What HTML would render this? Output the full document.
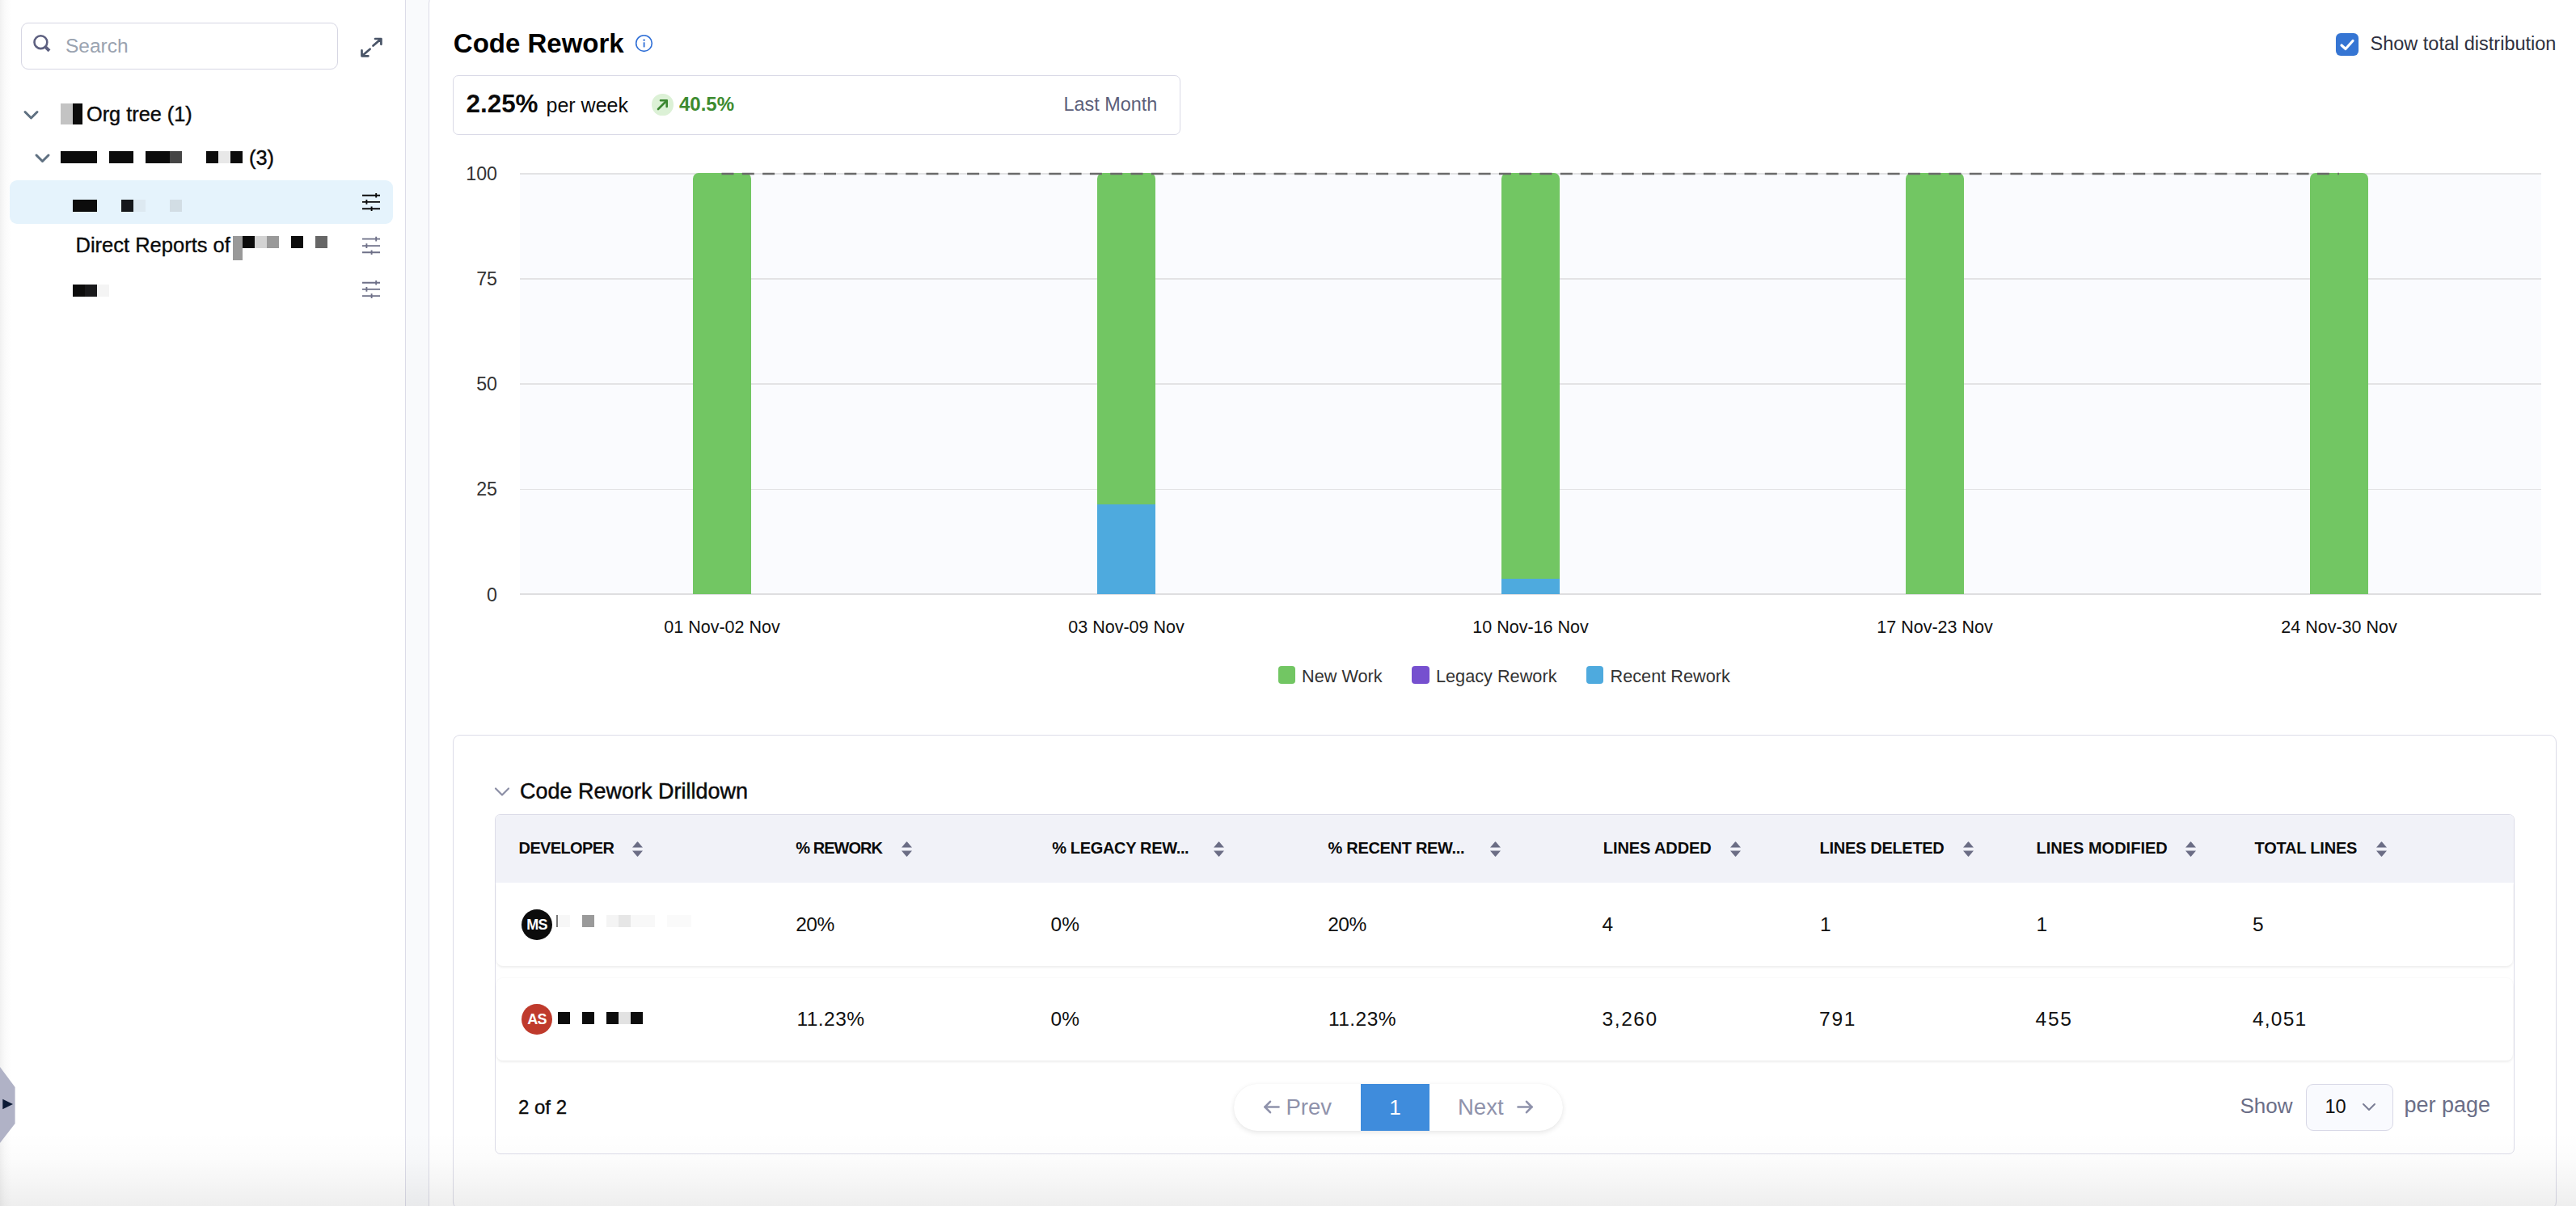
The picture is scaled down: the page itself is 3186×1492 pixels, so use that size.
<!DOCTYPE html>
<html><head><meta charset="utf-8">
<style>
*{box-sizing:border-box}
html,body{margin:0;padding:0}
body{width:3186px;height:1492px;overflow:hidden;position:relative;background:#fff;font-family:"Liberation Sans",sans-serif;color:#0b0b0b}
.a{position:absolute}
.t{position:absolute;white-space:nowrap;line-height:1}
.rd{position:absolute;background:#0c0c0c}
</style></head><body>

<!-- ===== SIDEBAR ===== -->
<div class="a" style="left:0;top:0;width:502px;height:1492px;background:linear-gradient(to right,#f1f1f1 0px,#fafafa 6px,#fff 14px);border-right:1.5px solid #dcdce8"></div>
<div class="a" style="left:502px;top:0;width:29px;height:1492px;background:#f9fafc"></div>

<!-- search -->
<div class="a" style="left:26px;top:28px;width:392px;height:58px;border:1.5px solid #d6d6e3;border-radius:9px;background:#fff"></div>
<svg class="a" style="left:38px;top:40px" width="28" height="28" viewBox="0 0 28 28"><circle cx="12.4" cy="12.2" r="7.9" fill="none" stroke="#5d6080" stroke-width="2.6"/><path d="M18.3 18.1 L23 22.8" stroke="#5d6080" stroke-width="4" stroke-linecap="butt"/></svg>
<div class="t" style="left:81px;top:44.8px;font-size:24.5px;color:#9aa3b0">Search</div>

<!-- expand icon -->
<svg class="a" style="left:440px;top:40px" width="40" height="36" viewBox="0 0 40 36"><g fill="none" stroke="#4a5568" stroke-width="2.7" stroke-linecap="round" stroke-linejoin="round"><path d="M24 8 H31.4 V14.8 M31 8.4 L21.5 16.5"/><path d="M7.5 22.4 V29.3 H15.4 M8 29 L17.6 20.7"/></g></svg>

<!-- tree -->
<svg class="a" style="left:28px;top:134px" width="22" height="16" viewBox="0 0 22 16"><path d="M3 4.5 L10.5 12 L18 4.5" fill="none" stroke="#5f7081" stroke-width="3" stroke-linecap="round" stroke-linejoin="round"/></svg>
<div class="rd" style="left:75px;top:128px;width:15px;height:26px;background:#c3c3c3"></div>
<div class="rd" style="left:90px;top:128px;width:12px;height:26px"></div>
<div class="t" style="left:107px;top:128.5px;font-size:25.3px;color:#0b0b0b;-webkit-text-stroke:0.4px #0b0b0b">Org tree (1)</div>

<svg class="a" style="left:42px;top:188px" width="22" height="16" viewBox="0 0 22 16"><path d="M3 4 L10.5 11.5 L18 4" fill="none" stroke="#5f7081" stroke-width="3" stroke-linecap="round" stroke-linejoin="round"/></svg>
<div class="rd" style="left:75px;top:187px;width:45px;height:15px"></div>
<div class="rd" style="left:135px;top:187px;width:30px;height:15px"></div>
<div class="rd" style="left:180px;top:187px;width:30px;height:15px"></div>
<div class="rd" style="left:210px;top:187px;width:15px;height:15px;background:#454545"></div>
<div class="rd" style="left:255px;top:187px;width:15px;height:15px"></div>
<div class="rd" style="left:270px;top:187px;width:15px;height:15px;background:#e8e8e8"></div>
<div class="rd" style="left:285px;top:187px;width:15px;height:15px"></div>
<div class="t" style="left:308px;top:182.5px;font-size:25.3px;color:#0b0b0b;-webkit-text-stroke:0.4px #0b0b0b">(3)</div>

<!-- selected row -->
<div class="a" style="left:12px;top:223px;width:474px;height:54px;background:#e5f3fc;border-radius:9px"></div>
<div class="rd" style="left:90px;top:247px;width:30px;height:15px"></div>
<div class="rd" style="left:150px;top:247px;width:15px;height:15px;background:#16181a"></div>
<div class="rd" style="left:165px;top:247px;width:15px;height:15px;background:#dde9f1"></div>
<div class="rd" style="left:210px;top:247px;width:15px;height:15px;background:#d2dde4"></div>
<svg class="a" style="left:444px;top:236px" width="30" height="26" viewBox="0 0 30 26"><g stroke="#0b0b0b" stroke-width="1.9" fill="none"><path d="M4 5.8 H26 M21.2 3 V8.6"/><path d="M4 13.9 H26 M9.4 11.1 V16.7"/><path d="M4 22.3 H26 M15.6 19.5 V25.1"/></g></svg>

<div class="t" style="left:93.5px;top:291.2px;font-size:25.5px;color:#0b0b0b;-webkit-text-stroke:0.35px #0b0b0b">Direct Reports of</div>
<div class="rd" style="left:288px;top:292px;width:12px;height:30px;background:#999"></div>
<div class="rd" style="left:300px;top:292px;width:15px;height:15px"></div>
<div class="rd" style="left:315px;top:292px;width:15px;height:15px;background:#d3d3d3"></div>
<div class="rd" style="left:330px;top:292px;width:15px;height:15px;background:#999"></div>
<div class="rd" style="left:360px;top:292px;width:15px;height:15px"></div>
<div class="rd" style="left:390px;top:292px;width:15px;height:15px;background:#666"></div>
<svg class="a" style="left:444px;top:290px" width="30" height="26" viewBox="0 0 30 26"><g stroke="#6e7088" stroke-width="1.9" fill="none"><path d="M4 5.6 H26 M21.2 2.8 V8.4"/><path d="M4 14.1 H26 M9.4 11.3 V16.9"/><path d="M4 22.2 H26 M15.6 19.4 V25"/></g></svg>

<div class="rd" style="left:90px;top:352px;width:15px;height:15px"></div>
<div class="rd" style="left:105px;top:352px;width:15px;height:15px;background:#19191b"></div>
<div class="rd" style="left:120px;top:352px;width:15px;height:15px;background:#f4f4f4"></div>
<svg class="a" style="left:444px;top:344px" width="30" height="26" viewBox="0 0 30 26"><g stroke="#6e7088" stroke-width="1.9" fill="none"><path d="M4 5.8 H26 M21.2 3 V8.6"/><path d="M4 13.9 H26 M9.4 11.1 V16.7"/><path d="M4 22.1 H26 M15.6 19.3 V24.9"/></g></svg>

<!-- collapse tab -->
<svg class="a" style="left:0;top:1318px" width="22" height="100" viewBox="0 0 22 100"><path d="M0 2 L18.6 27 V72 L0 96 Z" fill="#b0b2c6"/><path d="M3.3 41.7 L16 48 L3.3 54.3 Z" fill="#0b1a35"/></svg>

<!-- ===== MAIN CARD ===== -->
<div class="a" style="left:530px;top:-6px;width:2700px;height:1600px;border:1.5px solid #dcdce8;border-radius:10px;background:#fff"></div>

<!-- title -->
<div class="t" style="left:560.8px;top:36.5px;font-size:33px;font-weight:700;color:#000">Code Rework</div>
<svg class="a" style="left:784px;top:40.5px" width="26" height="26" viewBox="0 0 26 26"><circle cx="12.5" cy="12.6" r="9.8" fill="none" stroke="#2f6fd6" stroke-width="1.6"/><circle cx="12.6" cy="8.6" r="1.2" fill="#2f6fd6"/><path d="M12.6 11.3 V17.4" stroke="#2f6fd6" stroke-width="1.8"/></svg>

<!-- show total distribution -->
<div class="a" style="left:2889px;top:41px;width:28px;height:28px;border-radius:6px;background:#3575d3;box-shadow:0 0 3px rgba(0,0,0,0.06)"></div>
<svg class="a" style="left:2889px;top:41px" width="28" height="28" viewBox="0 0 28 28"><path d="M7 15 L12 19.5 L21 9.5" fill="none" stroke="#fff" stroke-width="3.2" stroke-linecap="round" stroke-linejoin="round"/></svg>
<div class="t" style="left:2931.5px;top:43px;font-size:23.5px;color:#2f3140">Show total distribution</div>

<!-- summary box -->
<div class="a" style="left:560px;top:93px;width:900px;height:74px;border:1.5px solid #d9d9e6;border-radius:7px"></div>
<div class="t" style="left:576.5px;top:113.2px;font-size:31.4px;font-weight:700;color:#0b0b0b">2.25%</div>
<div class="t" style="left:675.5px;top:117.5px;font-size:25px;color:#0b0b0b">per week</div>
<div class="a" style="left:806.3px;top:116.3px;width:26.4px;height:26.4px;border-radius:50%;background:#dcf1d6"></div>
<svg class="a" style="left:806px;top:116px" width="27" height="27" viewBox="0 0 27 27"><g fill="none" stroke="#3b8731" stroke-width="2.6" stroke-linecap="round" stroke-linejoin="round"><path d="M8 19 L18.5 8.5"/><path d="M11 8.3 H18.7 V16"/></g></svg>
<div class="t" style="left:840px;top:116.8px;font-size:24px;font-weight:700;color:#3d8b2f">40.5%</div>
<div class="t" style="left:1315.5px;top:118.2px;font-size:23.4px;color:#5c5f7a">Last Month</div>

<!-- chart -->
<div class="a" style="left:643px;top:215px;width:2500px;height:520px;background:#fafbfe"></div>
<div class="a" style="left:643px;top:214.2px;width:2500px;height:1.6px;background:#e3e3e5"></div>
<div class="a" style="left:643px;top:344.4px;width:2500px;height:1.6px;background:#e3e3e5"></div>
<div class="a" style="left:643px;top:474.4px;width:2500px;height:1.6px;background:#e3e3e5"></div>
<div class="a" style="left:643px;top:604.6px;width:2500px;height:1.6px;background:#e3e3e5"></div>
<div class="a" style="left:643px;top:734px;width:2500px;height:2px;background:#dedee0"></div>

<div class="t" style="left:515px;width:100px;text-align:right;top:204.4px;font-size:23.2px;color:#333">100</div>
<div class="t" style="left:515px;width:100px;text-align:right;top:334.4px;font-size:23.2px;color:#333">75</div>
<div class="t" style="left:515px;width:100px;text-align:right;top:464.4px;font-size:23.2px;color:#333">50</div>
<div class="t" style="left:515px;width:100px;text-align:right;top:594.4px;font-size:23.2px;color:#333">25</div>
<div class="t" style="left:515px;width:100px;text-align:right;top:724.6px;font-size:23.2px;color:#333">0</div>

<div class="a" style="left:857px;top:214px;width:72px;height:521px;background:#72c663;border-radius:7px 7px 0 0"></div>
<div class="a" style="left:1357px;top:214px;width:72px;height:521px;background:#72c663;border-radius:7px 7px 0 0"></div>
<div class="a" style="left:1357px;top:624px;width:72px;height:111px;background:#4eaade"></div>
<div class="a" style="left:1857px;top:214px;width:72px;height:521px;background:#72c663;border-radius:7px 7px 0 0"></div>
<div class="a" style="left:1857px;top:716px;width:72px;height:19px;background:#4eaade"></div>
<div class="a" style="left:2357px;top:214px;width:72px;height:521px;background:#72c663;border-radius:7px 7px 0 0"></div>
<div class="a" style="left:2857px;top:214px;width:72px;height:521px;background:#72c663;border-radius:7px 7px 0 0"></div>
<svg class="a" style="left:0;top:0" width="3186" height="240"><path d="M892.5 215 H2893" stroke="#6a6a6a" stroke-width="2.3" stroke-dasharray="15 10.3"/></svg>

<div class="t" style="left:793px;width:200px;text-align:center;top:765.8px;font-size:21.5px;color:#111">01 Nov-02 Nov</div>
<div class="t" style="left:1293px;width:200px;text-align:center;top:765.8px;font-size:21.5px;color:#111">03 Nov-09 Nov</div>
<div class="t" style="left:1793px;width:200px;text-align:center;top:765.8px;font-size:21.5px;color:#111">10 Nov-16 Nov</div>
<div class="t" style="left:2293px;width:200px;text-align:center;top:765.8px;font-size:21.5px;color:#111">17 Nov-23 Nov</div>
<div class="t" style="left:2793px;width:200px;text-align:center;top:765.8px;font-size:21.5px;color:#111">24 Nov-30 Nov</div>

<div class="a" style="left:1580.5px;top:824px;width:21.5px;height:21.5px;border-radius:4px;background:#72c663"></div>
<div class="t" style="left:1610px;top:826.4px;font-size:21.7px;color:#333">New Work</div>
<div class="a" style="left:1746.3px;top:824px;width:21.5px;height:21.5px;border-radius:4px;background:#7650cf"></div>
<div class="t" style="left:1776px;top:826.4px;font-size:21.7px;color:#333">Legacy Rework</div>
<div class="a" style="left:1961.8px;top:824px;width:21.5px;height:21.5px;border-radius:4px;background:#4eaade"></div>
<div class="t" style="left:1991.5px;top:826.4px;font-size:21.7px;color:#333">Recent Rework</div>

<!-- drilldown card -->
<div class="a" style="left:560px;top:909px;width:2601.5px;height:587px;border:1.5px solid #dcdce8;border-radius:9px;background:#fff"></div>
<svg class="a" style="left:608px;top:968px" width="26" height="22" viewBox="0 0 26 22"><path d="M5 7.5 L13 15.5 L21 7.5" fill="none" stroke="#8b8ea5" stroke-width="2.2" stroke-linecap="round" stroke-linejoin="round"/></svg>
<div class="t" style="left:643px;top:966px;font-size:27px;color:#0b0b0b;-webkit-text-stroke:0.45px #0b0b0b">Code Rework Drilldown</div>

<!-- table container -->
<div class="a" style="left:612px;top:1007px;width:2498px;height:421px;border:1.5px solid #dcdce8;border-radius:7px;background:#fff;overflow:hidden">
  <div class="a" style="left:0;top:0;width:2498px;height:84px;background:#f1f2f8"></div>
</div>
<!-- header labels -->
<div class="t" style="left:641.6px;top:1039px;font-size:20px;font-weight:700;letter-spacing:-0.64px;color:#0b0b0b">DEVELOPER</div>
<div class="t" style="left:984.3px;top:1039px;font-size:20px;font-weight:700;letter-spacing:-0.97px;color:#0b0b0b">% REWORK</div>
<div class="t" style="left:1301.2px;top:1039px;font-size:20px;font-weight:700;letter-spacing:-0.33px;color:#0b0b0b">% LEGACY REW...</div>
<div class="t" style="left:1642.5px;top:1039px;font-size:20px;font-weight:700;letter-spacing:-0.3px;color:#0b0b0b">% RECENT REW...</div>
<div class="t" style="left:1982.8px;top:1039px;font-size:20px;font-weight:700;letter-spacing:-0.09px;color:#0b0b0b">LINES ADDED</div>
<div class="t" style="left:2250.6px;top:1039px;font-size:20px;font-weight:700;letter-spacing:-0.3px;color:#0b0b0b">LINES DELETED</div>
<div class="t" style="left:2518.5px;top:1039px;font-size:20px;font-weight:700;color:#0b0b0b">LINES MODIFIED</div>
<div class="t" style="left:2788.5px;top:1039px;font-size:20px;font-weight:700;letter-spacing:-0.2px;color:#0b0b0b">TOTAL LINES</div>
<!-- sort icons -->
<svg width="0" height="0" style="position:absolute"><defs><g id="srt"><path d="M1 8.6 L7 1.6 Q7.5 1 8 1.6 L14 8.6 Z" fill="#6b6d85"/><path d="M1 12.4 L7 19.4 Q7.5 20 8 19.4 L14 12.4 Z" fill="#6b6d85"/></g></defs></svg>
<svg class="a" style="left:781px;top:1040px" width="15" height="21"><use href="#srt"/></svg>
<svg class="a" style="left:1113.5px;top:1040px" width="15" height="21"><use href="#srt"/></svg>
<svg class="a" style="left:1500px;top:1040px" width="15" height="21"><use href="#srt"/></svg>
<svg class="a" style="left:1842px;top:1040px" width="15" height="21"><use href="#srt"/></svg>
<svg class="a" style="left:2138.5px;top:1040px" width="15" height="21"><use href="#srt"/></svg>
<svg class="a" style="left:2426.5px;top:1040px" width="15" height="21"><use href="#srt"/></svg>
<svg class="a" style="left:2702px;top:1040px" width="15" height="21"><use href="#srt"/></svg>
<svg class="a" style="left:2937.5px;top:1040px" width="15" height="21"><use href="#srt"/></svg>

<!-- rows -->
<div class="a" style="left:613.5px;top:1092px;width:2494px;height:103px;background:#fff;border-radius:0 0 8px 8px;box-shadow:0 2px 3px rgba(0,0,0,0.07)"></div>
<div class="a" style="left:613.5px;top:1209.5px;width:2494px;height:102.5px;background:#fff;border-radius:8px;box-shadow:0 2px 3px rgba(0,0,0,0.07),0 -1px 1px rgba(0,0,0,0.02)"></div>

<div class="a" style="left:645px;top:1124.5px;width:38px;height:38px;border-radius:50%;background:#0c0c0c"></div>
<div class="t" style="left:645px;width:38px;text-align:center;top:1134.5px;font-size:18px;font-weight:700;color:#fff;letter-spacing:-0.8px">MS</div>
<div class="rd" style="left:688px;top:1132px;width:2px;height:15px;background:#777"></div>
<div class="rd" style="left:690px;top:1132px;width:15px;height:15px;background:#f7f7f7"></div>
<div class="rd" style="left:720px;top:1132px;width:15px;height:15px;background:#9a9a9a"></div>
<div class="rd" style="left:750px;top:1132px;width:15px;height:15px;background:#f4f4f4"></div>
<div class="rd" style="left:765px;top:1132px;width:15px;height:15px;background:#e6e6e6"></div>
<div class="rd" style="left:780px;top:1132px;width:30px;height:15px;background:#f8f8f8"></div>
<div class="rd" style="left:825px;top:1132px;width:30px;height:15px;background:#fafafa"></div>

<div class="a" style="left:645px;top:1241.5px;width:38px;height:38px;border-radius:50%;background:#bf3a2c"></div>
<div class="t" style="left:645px;width:38px;text-align:center;top:1251.5px;font-size:18px;font-weight:700;color:#fff;letter-spacing:-0.8px">AS</div>
<div class="rd" style="left:690px;top:1252px;width:15px;height:15px"></div>
<div class="rd" style="left:720px;top:1252px;width:15px;height:15px"></div>
<div class="rd" style="left:750px;top:1252px;width:15px;height:15px"></div>
<div class="rd" style="left:765px;top:1252px;width:15px;height:15px;background:#e2e2e2"></div>
<div class="rd" style="left:780px;top:1252px;width:15px;height:15px"></div>

<div class="t" style="left:984.2px;top:1132.3px;font-size:24.5px;color:#111;letter-spacing:-0.5px">20%</div>
<div class="t" style="left:1299.5px;top:1132.3px;font-size:24.5px;color:#111">0%</div>
<div class="t" style="left:1642.2px;top:1132.3px;font-size:24.5px;color:#111;letter-spacing:-0.5px">20%</div>
<div class="t" style="left:1981.5px;top:1132.3px;font-size:24.5px;color:#111">4</div>
<div class="t" style="left:2251px;top:1132.3px;font-size:24.5px;color:#111">1</div>
<div class="t" style="left:2518.5px;top:1132.3px;font-size:24.5px;color:#111">1</div>
<div class="t" style="left:2786px;top:1132.3px;font-size:24.5px;color:#111">5</div>

<div class="t" style="left:985.5px;top:1249.2px;font-size:24.5px;color:#111;letter-spacing:0.45px">11.23%</div>
<div class="t" style="left:1299.5px;top:1249.2px;font-size:24.5px;color:#111">0%</div>
<div class="t" style="left:1643px;top:1249.2px;font-size:24.5px;color:#111;letter-spacing:0.45px">11.23%</div>
<div class="t" style="left:1981.5px;top:1249.2px;font-size:24.5px;color:#111;letter-spacing:1.6px">3,260</div>
<div class="t" style="left:2250px;top:1249.2px;font-size:24.5px;color:#111;letter-spacing:1.8px">791</div>
<div class="t" style="left:2517.5px;top:1249.2px;font-size:24.5px;color:#111;letter-spacing:1.8px">455</div>
<div class="t" style="left:2786px;top:1249.2px;font-size:24.5px;color:#111;letter-spacing:1.2px">4,051</div>

<!-- footer -->
<div class="t" style="left:641px;top:1357.6px;font-size:24px;color:#0b0b0b;-webkit-text-stroke:0.35px #0b0b0b">2 of 2</div>
<div class="a" style="left:1526px;top:1341px;width:407px;height:58px;border-radius:29px;background:#fff;box-shadow:0 2px 6px rgba(0,0,0,0.10),0 0 1px rgba(0,0,0,0.06);overflow:hidden">
  <div class="a" style="left:157px;top:0;width:85px;height:58px;background:#3f8cdc"></div>
</div>
<svg class="a" style="left:1560px;top:1358px" width="26" height="26" viewBox="0 0 26 26"><g fill="none" stroke="#8f92ab" stroke-width="2.6" stroke-linecap="round" stroke-linejoin="round"><path d="M4.5 11.5 H21.5"/><path d="M11 4.8 L4.5 11.5 L11 18.2"/></g></svg>
<div class="t" style="left:1590.5px;top:1355.6px;font-size:27.5px;color:#8f92ab">Prev</div>
<div class="t" style="left:1683px;width:85px;text-align:center;top:1357px;font-size:26px;color:#fff">1</div>
<div class="t" style="left:1803px;top:1355.6px;font-size:27.5px;color:#8f92ab">Next</div>
<svg class="a" style="left:1873px;top:1358px" width="26" height="26" viewBox="0 0 26 26"><g fill="none" stroke="#8f92ab" stroke-width="2.6" stroke-linecap="round" stroke-linejoin="round"><path d="M4.5 11.5 H21.5"/><path d="M15 4.8 L21.5 11.5 L15 18.2"/></g></svg>

<div class="t" style="left:2770.5px;top:1355px;font-size:26px;color:#6b6e87">Show</div>
<div class="a" style="left:2852px;top:1341px;width:108px;height:58px;border:1.5px solid #d8d8e6;border-radius:9px;background:#f9fafe"></div>
<div class="t" style="left:2875.5px;top:1357.8px;font-size:23.6px;color:#111">10</div>
<svg class="a" style="left:2918px;top:1360px" width="24" height="20" viewBox="0 0 24 20"><path d="M5 6 L12 13 L19 6" fill="none" stroke="#7a7d95" stroke-width="2" stroke-linecap="round" stroke-linejoin="round"/></svg>
<div class="t" style="left:2973.5px;top:1354px;font-size:27px;color:#6b6e87">per page</div>


<!-- bottom fade -->
<div class="a" style="left:0;top:1400px;width:3186px;height:92px;background:linear-gradient(to bottom,rgba(0,0,0,0) 0%,rgba(0,0,0,0.012) 35%,rgba(0,0,0,0.035) 65%,rgba(0,0,0,0.065) 100%);pointer-events:none"></div>
</body></html>
